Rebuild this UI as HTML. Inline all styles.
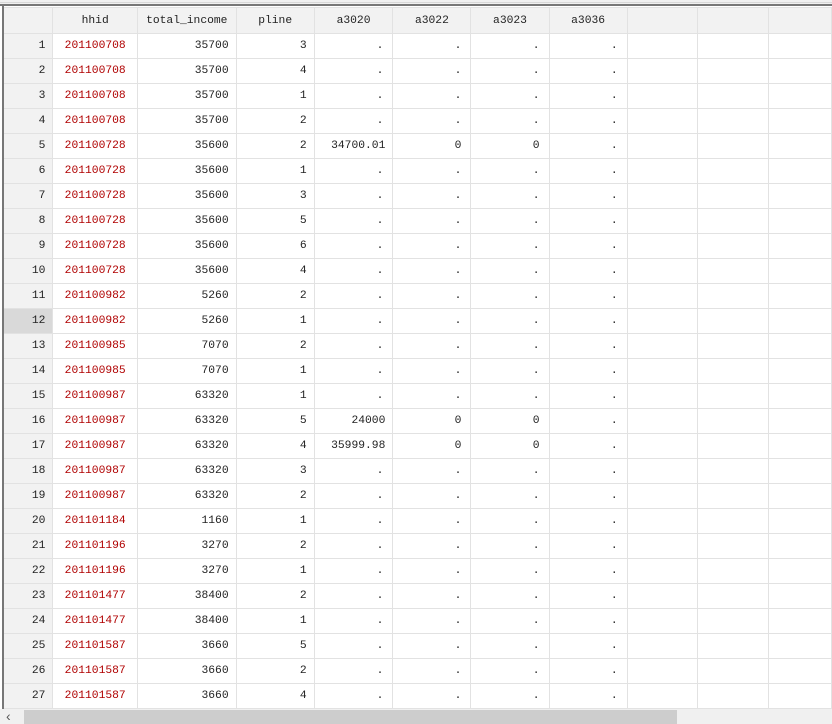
<!DOCTYPE html>
<html><head><style>
html,body{margin:0;padding:0;width:832px;height:724px;overflow:hidden;background:#fff;}
body{position:relative;font-family:"Liberation Mono",monospace;font-size:11.3px;color:#222;}
.topbar{position:absolute;left:0;top:0;width:832px;height:6px;background:#f0f0f0;border-bottom:2px solid #777;box-sizing:border-box;}
.topbar:before{content:"";position:absolute;left:0;right:0;top:2px;height:1px;background:#d8d8d8;}
.left{position:absolute;left:2px;top:6px;width:2px;height:703px;background:#777;}
table{position:absolute;left:3px;top:7px;border-collapse:collapse;table-layout:fixed;}
td{height:24px;border:1px solid #e2e2e2;padding:0 7px 0 0;text-align:right;white-space:nowrap;overflow:hidden;line-height:24px;}
tr.h td{background:#f2f2f2;text-align:center;padding:0;height:25px;}
td.n{background:#f2f2f2;padding-right:7px;}
td.n.sel{background:#d9d9d9;}
td.r{color:#b00000;text-align:center;padding:0;}
td.d{padding-right:9px;}
.sb{position:absolute;left:0;top:709px;width:832px;height:15px;background:#f0f0f0;}
.thumb{position:absolute;left:24px;top:1px;width:653px;height:14px;background:#cdcdcd;}
.arr{position:absolute;left:6px;top:0;font-family:"Liberation Sans",sans-serif;font-size:14px;color:#555;line-height:15px;}
</style></head><body>
<div class="topbar"></div>
<table>
<colgroup><col style="width:50px"><col style="width:85px"><col style="width:99px"><col style="width:79px"><col style="width:79px"><col style="width:79px"><col style="width:79px"><col style="width:79px"><col style="width:72px"><col style="width:72px"><col style="width:64px"></colgroup>
<tr class="h"><td></td><td>hhid</td><td>total_income</td><td>pline</td><td>a3020</td><td>a3022</td><td>a3023</td><td>a3036</td><td></td><td></td><td></td></tr>
<tr><td class="n">1</td><td class="r">201100708</td><td>35700</td><td>3</td><td class="d">.</td><td class="d">.</td><td class="d">.</td><td class="d">.</td><td></td><td></td><td></td></tr>
<tr><td class="n">2</td><td class="r">201100708</td><td>35700</td><td>4</td><td class="d">.</td><td class="d">.</td><td class="d">.</td><td class="d">.</td><td></td><td></td><td></td></tr>
<tr><td class="n">3</td><td class="r">201100708</td><td>35700</td><td>1</td><td class="d">.</td><td class="d">.</td><td class="d">.</td><td class="d">.</td><td></td><td></td><td></td></tr>
<tr><td class="n">4</td><td class="r">201100708</td><td>35700</td><td>2</td><td class="d">.</td><td class="d">.</td><td class="d">.</td><td class="d">.</td><td></td><td></td><td></td></tr>
<tr><td class="n">5</td><td class="r">201100728</td><td>35600</td><td>2</td><td>34700.01</td><td class="d">0</td><td class="d">0</td><td class="d">.</td><td></td><td></td><td></td></tr>
<tr><td class="n">6</td><td class="r">201100728</td><td>35600</td><td>1</td><td class="d">.</td><td class="d">.</td><td class="d">.</td><td class="d">.</td><td></td><td></td><td></td></tr>
<tr><td class="n">7</td><td class="r">201100728</td><td>35600</td><td>3</td><td class="d">.</td><td class="d">.</td><td class="d">.</td><td class="d">.</td><td></td><td></td><td></td></tr>
<tr><td class="n">8</td><td class="r">201100728</td><td>35600</td><td>5</td><td class="d">.</td><td class="d">.</td><td class="d">.</td><td class="d">.</td><td></td><td></td><td></td></tr>
<tr><td class="n">9</td><td class="r">201100728</td><td>35600</td><td>6</td><td class="d">.</td><td class="d">.</td><td class="d">.</td><td class="d">.</td><td></td><td></td><td></td></tr>
<tr><td class="n">10</td><td class="r">201100728</td><td>35600</td><td>4</td><td class="d">.</td><td class="d">.</td><td class="d">.</td><td class="d">.</td><td></td><td></td><td></td></tr>
<tr><td class="n">11</td><td class="r">201100982</td><td>5260</td><td>2</td><td class="d">.</td><td class="d">.</td><td class="d">.</td><td class="d">.</td><td></td><td></td><td></td></tr>
<tr><td class="n sel">12</td><td class="r">201100982</td><td>5260</td><td>1</td><td class="d">.</td><td class="d">.</td><td class="d">.</td><td class="d">.</td><td></td><td></td><td></td></tr>
<tr><td class="n">13</td><td class="r">201100985</td><td>7070</td><td>2</td><td class="d">.</td><td class="d">.</td><td class="d">.</td><td class="d">.</td><td></td><td></td><td></td></tr>
<tr><td class="n">14</td><td class="r">201100985</td><td>7070</td><td>1</td><td class="d">.</td><td class="d">.</td><td class="d">.</td><td class="d">.</td><td></td><td></td><td></td></tr>
<tr><td class="n">15</td><td class="r">201100987</td><td>63320</td><td>1</td><td class="d">.</td><td class="d">.</td><td class="d">.</td><td class="d">.</td><td></td><td></td><td></td></tr>
<tr><td class="n">16</td><td class="r">201100987</td><td>63320</td><td>5</td><td>24000</td><td class="d">0</td><td class="d">0</td><td class="d">.</td><td></td><td></td><td></td></tr>
<tr><td class="n">17</td><td class="r">201100987</td><td>63320</td><td>4</td><td>35999.98</td><td class="d">0</td><td class="d">0</td><td class="d">.</td><td></td><td></td><td></td></tr>
<tr><td class="n">18</td><td class="r">201100987</td><td>63320</td><td>3</td><td class="d">.</td><td class="d">.</td><td class="d">.</td><td class="d">.</td><td></td><td></td><td></td></tr>
<tr><td class="n">19</td><td class="r">201100987</td><td>63320</td><td>2</td><td class="d">.</td><td class="d">.</td><td class="d">.</td><td class="d">.</td><td></td><td></td><td></td></tr>
<tr><td class="n">20</td><td class="r">201101184</td><td>1160</td><td>1</td><td class="d">.</td><td class="d">.</td><td class="d">.</td><td class="d">.</td><td></td><td></td><td></td></tr>
<tr><td class="n">21</td><td class="r">201101196</td><td>3270</td><td>2</td><td class="d">.</td><td class="d">.</td><td class="d">.</td><td class="d">.</td><td></td><td></td><td></td></tr>
<tr><td class="n">22</td><td class="r">201101196</td><td>3270</td><td>1</td><td class="d">.</td><td class="d">.</td><td class="d">.</td><td class="d">.</td><td></td><td></td><td></td></tr>
<tr><td class="n">23</td><td class="r">201101477</td><td>38400</td><td>2</td><td class="d">.</td><td class="d">.</td><td class="d">.</td><td class="d">.</td><td></td><td></td><td></td></tr>
<tr><td class="n">24</td><td class="r">201101477</td><td>38400</td><td>1</td><td class="d">.</td><td class="d">.</td><td class="d">.</td><td class="d">.</td><td></td><td></td><td></td></tr>
<tr><td class="n">25</td><td class="r">201101587</td><td>3660</td><td>5</td><td class="d">.</td><td class="d">.</td><td class="d">.</td><td class="d">.</td><td></td><td></td><td></td></tr>
<tr><td class="n">26</td><td class="r">201101587</td><td>3660</td><td>2</td><td class="d">.</td><td class="d">.</td><td class="d">.</td><td class="d">.</td><td></td><td></td><td></td></tr>
<tr><td class="n">27</td><td class="r">201101587</td><td>3660</td><td>4</td><td class="d">.</td><td class="d">.</td><td class="d">.</td><td class="d">.</td><td></td><td></td><td></td></tr>
</table>
<div class="left"></div>
<div class="sb"><span class="arr">&lsaquo;</span><div class="thumb"></div></div>
</body></html>
